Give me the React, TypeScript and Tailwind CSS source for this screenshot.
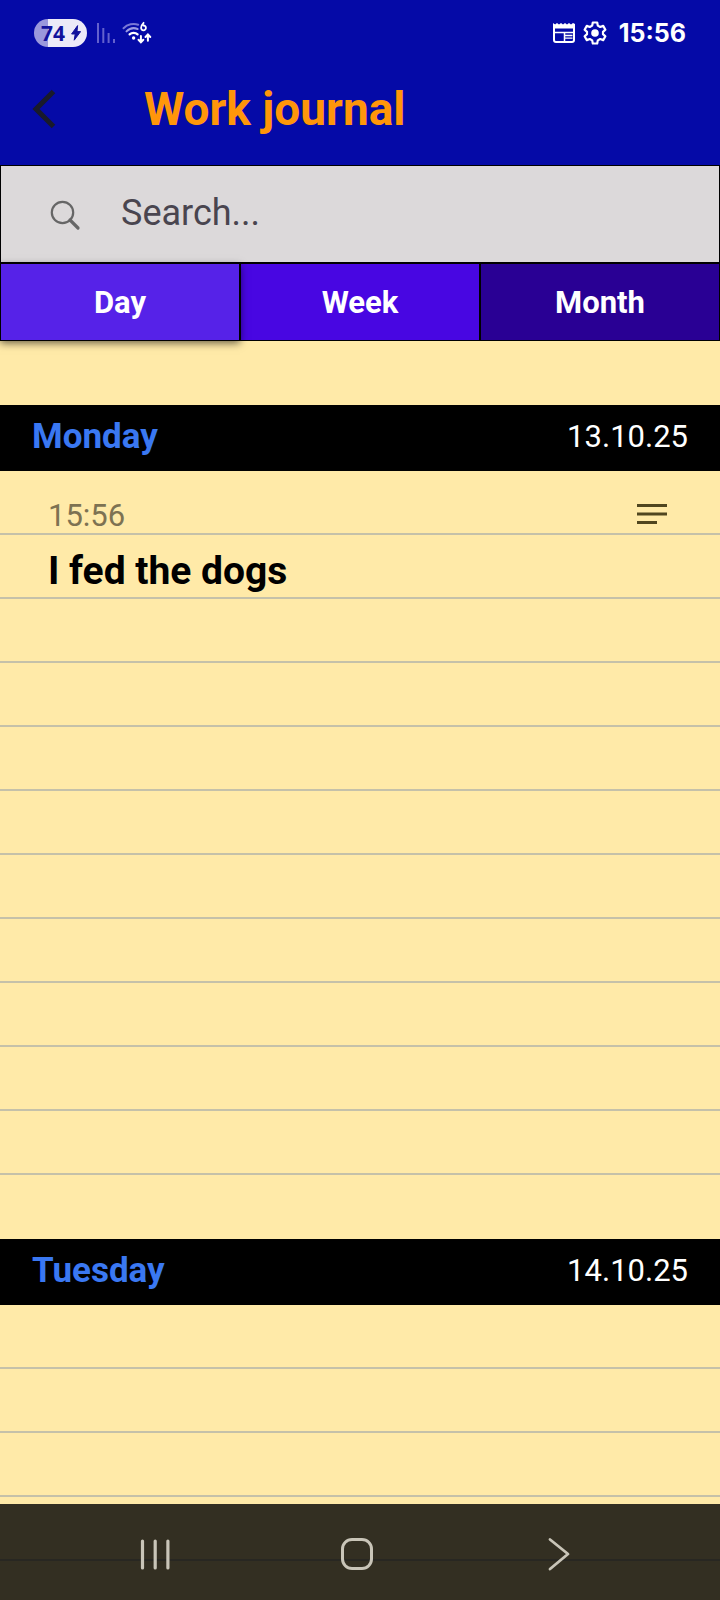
import type { ReactNode } from "react";

type Entry = { time: string; text: string };
type Day = { name: string; date: string; entries: Entry[] };

const LINES_PER_DAY = 12;

const days: Day[] = [
  { name: "Monday", date: "13.10.25", entries: [{ time: "15:56", text: "I fed the dogs" }] },
  { name: "Tuesday", date: "14.10.25", entries: [] },
];

function StatusBar() {
  return (
    <div className="flex h-16 items-center justify-between px-[34px] pt-0.5 text-white">
      <div className="flex items-center">
        <div className="flex h-7 w-[53px] items-center gap-1.5 rounded-full bg-[linear-gradient(to_right,#9a98dc_14px,#eceaf8_14px)] pl-[7px] font-['Open_Sans',sans-serif] text-[21px] leading-7 font-bold text-[#12129c]">
          <span>74</span>
          <svg width="10" height="16" viewBox="0 0 10 16" fill="currentColor" aria-hidden="true">
            <path d="M6.6 0.6 0.6 9h3.6l-1 6.2L9.6 6.6H6z" stroke="currentColor" strokeWidth="1" strokeLinejoin="round" />
          </svg>
        </div>
        <svg className="ml-2.5" width="19" height="20" viewBox="0 0 19 20" fill="none" stroke="#6361cd" strokeWidth="2" aria-hidden="true">
          <path d="M1 0v20M6.3 5v15M11.6 10v10M17 16v4" />
        </svg>
        <svg className="ml-1.5" width="30" height="24" viewBox="0 0 30 24" fill="none" strokeLinecap="round" aria-hidden="true">
          <path d="M1.500 7.200C5.500 3.200 11.500 1.900 16.200 3.700" stroke="#7a78d6" strokeWidth="2" />
          <path d="M4.500 10.400C7.600 7.300 12 6.500 15.600 8" stroke="#9c9be2" strokeWidth="2" />
          <path d="M7.600 13.400c2.200-2.100 5.800-2.100 8 0" stroke="#fff" strokeWidth="2.200" />
          <circle cx="11.600" cy="17" r="1.700" fill="#fff" />
          <path d="M21.600 1.800c-1.500 1.500-2.500 3.300-2.500 5a2.400 2.400 0 1 0 2.400-2.300" stroke="#fff" strokeWidth="1.800" />
          <path d="M18.900 15v6M16.500 18.800l2.400 2.600 2.400-2.600M25.900 19.800v-6M23.500 16l2.400-2.600 2.400 2.600" stroke="#fff" strokeWidth="2" />
        </svg>
      </div>
      <div className="flex items-center">
        <svg width="22" height="20" viewBox="0 0 22 20" fill="none" stroke="#fff" aria-hidden="true">
          <path d="M1 1.500V17a2 2 0 0 0 2 2h16a2 2 0 0 0 2-2V1.500" strokeWidth="2" />
          <path d="M0 5.500V0l2 1.600L4 0l2 1.600L8 0l2 1.600L12 0l2 1.600L16 0l2 1.600L20 0l2 1v4.500z" fill="#fff" stroke="none" />
          <path d="M2 9.500h18M11.500 9v9" strokeWidth="1.500" />
          <path d="M11.500 12.500h8M11.500 15.200h8" strokeWidth="1.300" />
        </svg>
        <svg className="ml-2" width="24" height="24" viewBox="0 0 24 24" fill="none" stroke="#fff" strokeWidth="2.200" strokeLinejoin="round" aria-hidden="true">
          <path d="M9.800 1.500h4.400l.6 3.100 2.400 1.400 3-1.100 2.200 3.800-2.400 2.100v2.400l2.400 2.100-2.200 3.800-3-1.100-2.400 1.400-.6 3.100H9.800l-.6-3.100-2.400-1.400-3 1.100-2.200-3.800L4 13.200v-2.400L1.600 8.700l2.200-3.800 3 1.100 2.400-1.400z" />
          <circle cx="12" cy="12" r="3.800" fill="#fff" stroke="none" />
        </svg>
        <span className="ml-3 font-[Inter,sans-serif] text-[25px] leading-8 font-bold">15:56</span>
      </div>
    </div>
  );
}

function Header() {
  return (
    <header className="shrink-0 bg-[#050aa7]">
      <StatusBar />
      <div className="flex h-[101px] items-start pl-8">
        <button type="button" aria-label="Back" className="flex h-[90px] w-28 items-center text-[#191a2b]">
          <svg width="24" height="40" viewBox="0 0 24 40" fill="none" stroke="currentColor" strokeWidth="5" aria-hidden="true">
            <path d="M21.500 2.500 4 20l17.500 17.500" />
          </svg>
        </button>
        <h1 className="text-[46px] leading-[90px] font-bold text-[#ff960a]">Work journal</h1>
      </div>
    </header>
  );
}

function SearchField() {
  return (
    <label className="flex h-[99px] shrink-0 items-center border border-b-2 border-black bg-[#dcd9da] pl-[49px]">
      <svg className="mt-0.5" width="31" height="31" viewBox="0 0 31 31" fill="none" stroke="#666" aria-hidden="true">
        <circle cx="12.500" cy="12.500" r="10.700" strokeWidth="2.200" />
        <path d="m20 20 8 8" strokeWidth="3.200" strokeLinecap="round" />
      </svg>
      <input
        type="text"
        aria-label="Search"
        placeholder="Search..."
        className="ml-10 h-[90px] min-w-0 flex-1 bg-transparent pb-0.5 text-[36px] text-[#49454f] outline-none placeholder:text-[#49454f]"
      />
    </label>
  );
}

function Tabs() {
  const base = "h-[77px] border-r border-b border-l border-black pt-0.5 text-[31px] font-bold text-white";
  return (
    <nav aria-label="Period" className="grid shrink-0 grid-cols-3">
      <button type="button" aria-pressed="true" className={`${base} relative bg-[#5622e8] shadow-[0_2px_8px_rgba(0,0,0,0.6)]`}>Day</button>
      <button type="button" aria-pressed="false" className={`${base} bg-[#4806e2]`}>Week</button>
      <button type="button" aria-pressed="false" className={`${base} bg-[#290094]`}>Month</button>
    </nav>
  );
}

function Line({ children }: { children?: ReactNode }) {
  return (
    <div className="flex h-16 items-end justify-between border-b-2 border-[#c5c1a9] px-12 last:border-transparent">
      {children}
    </div>
  );
}

function DaySection({ day }: { day: Day }) {
  const blank = LINES_PER_DAY - day.entries.length * 2;
  return (
    <section>
      <div className="flex h-[66px] items-center justify-between bg-black px-8 pb-0.5">
        <h2 className="text-[35px] leading-10 font-bold text-[#3a78f2]">{day.name}</h2>
        <time className="text-[31px] leading-10 text-white">{day.date}</time>
      </div>
      <div>
        {day.entries.map((entry) => (
          <div key={entry.time}>
            <Line>
              <time className="text-[31px] leading-[34px] text-[#7d7252]">{entry.time}</time>
              <button type="button" aria-label="Entry details" className="mr-1 pb-2">
                <svg width="32" height="22" viewBox="0 0 32 22" fill="#50461f" aria-hidden="true">
                  <path d="M1 1h30v3H1zM1 9.500h30v3H1zM1 18h20v3H1z" />
                </svg>
              </button>
            </Line>
            <div className="flex h-16 items-center border-b-2 border-[#c5c1a9] px-12 pt-2.5">
              <p className="text-[39px] leading-[50px] font-bold text-black">{entry.text}</p>
            </div>
          </div>
        ))}
        {Array.from({ length: blank }, (_, i) => (
          <Line key={i} />
        ))}
      </div>
    </section>
  );
}

function SystemNav() {
  return (
    <nav aria-label="System" className="absolute inset-x-0 bottom-0 flex h-24 items-center justify-between bg-[#000000cc] pt-1 pr-[145px] pl-[138px] text-[#c9c5b8]">
      <button type="button" aria-label="Recent apps">
        <svg width="34" height="34" viewBox="0 0 34 34" fill="none" stroke="currentColor" strokeWidth="3.200" strokeLinecap="round" aria-hidden="true">
          <path d="M4.500 4v27M17.200 4v27M29.900 4v27" />
        </svg>
      </button>
      <button type="button" aria-label="Home">
        <svg width="34" height="34" viewBox="0 0 34 34" fill="none" stroke="currentColor" strokeWidth="3" aria-hidden="true">
          <rect x="2.500" y="2.500" width="29" height="29" rx="9.500" />
        </svg>
      </button>
      <button type="button" aria-label="Back">
        <svg width="34" height="34" viewBox="0 0 34 34" fill="none" stroke="currentColor" strokeWidth="2.800" strokeLinecap="round" strokeLinejoin="round" aria-hidden="true">
          <path d="m9 2.500 18 14.500L9 32" />
        </svg>
      </button>
    </nav>
  );
}

export default function App() {
  return (
    <div className="relative flex h-screen flex-col overflow-hidden bg-[#ffeaa8] font-[Roboto,sans-serif]">
      <Header />
      <SearchField />
      <Tabs />
      <main className="min-h-0 flex-1 overflow-y-auto pt-16 pb-24 [scrollbar-width:none]">
        {days.map((day) => (
          <DaySection key={day.name} day={day} />
        ))}
      </main>
      <SystemNav />
    </div>
  );
}
